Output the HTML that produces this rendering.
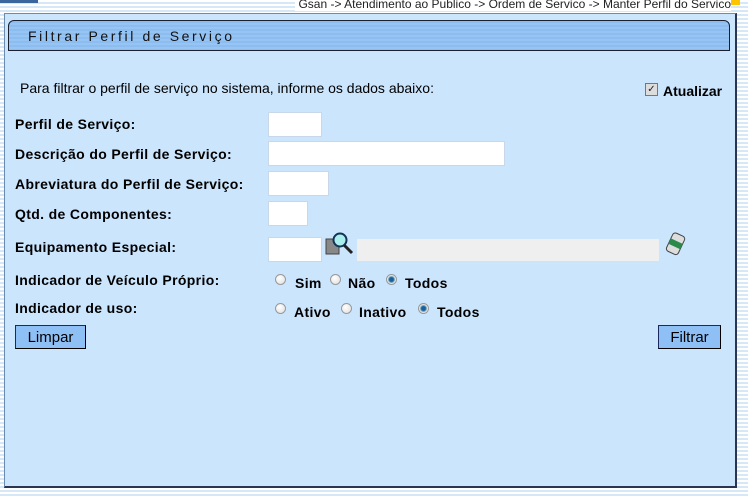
<!DOCTYPE html>
<html><head><meta charset="utf-8"><style>
body{margin:0;width:748px;height:498px;overflow:hidden;position:relative;font-family:"Liberation Sans",Arial,sans-serif;
background:repeating-linear-gradient(180deg,#ffffff 0 2px,#d6e8f7 2px 4px);}
.a{position:absolute}
.panel{left:4px;top:13px;width:733px;height:475px;background:#cbe5fd;border:1px solid #223;border-left-color:#6a8cb0;border-top-color:#6a8cb0;box-sizing:border-box;border-right:2px solid #2a3550;border-bottom:2px solid #2a3550}
.title{left:8px;top:20px;width:722px;height:31px;box-sizing:border-box;border:1px solid #1a2030;border-radius:6px 6px 0 0;
background:repeating-linear-gradient(180deg,#8dbdf0 0 2px,#97c5f3 2px 4px);font-size:14px;letter-spacing:2.6px;color:#111;padding:7px 0 0 19px}
.l{font-size:14px;font-weight:bold;color:#000;left:15px;letter-spacing:0.35px}
.in{background:#fff;border:1px solid #c8d8e8;box-sizing:border-box}
.r{width:11px;height:11px;border-radius:50%;border:1px solid #999;background:radial-gradient(circle at 40% 35%,#fff,#ddd);box-sizing:border-box}
.r.on{background:radial-gradient(circle,#1a5fa0 0 2px,#7ab 3px,#eee 4px)}
.btn{background:#8fc0f5;border:1px solid #1a2a60;border-right-color:#000;border-bottom-color:#000;font-size:15px;text-align:center;box-sizing:border-box;padding-top:3px;height:24px}
</style></head><body>
<div class="a" style="left:0;top:0;width:38px;height:3px;background:#3a66a0"></div>
<div class="a" style="left:550px;top:0;width:190px;height:5px;background:#ffc400"></div>
<div class="a" style="right:17px;top:-3px;font-size:12px;color:#222;background:#fff;padding-left:3px">Gsan -&gt; Atendimento ao Publico -&gt; Ordem de Servico -&gt; Manter Perfil do Servico</div>
<div class="a panel"></div>
<div class="a title">Filtrar Perfil de Serviço</div>
<div class="a" style="left:20px;top:80px;font-size:14px">Para filtrar o perfil de serviço no sistema, informe os dados abaixo:</div>
<div class="a" style="left:645px;top:83px;width:11px;height:11px;border:1px solid #777;background:#ddd;font-size:10px;line-height:11px;text-align:center;color:#222">✓</div>
<div class="a l" style="left:663px;top:83px;letter-spacing:0">Atualizar</div>
<div class="a l" style="top:116px">Perfil de Serviço:</div>
<div class="a in" style="left:268px;top:112px;width:54px;height:25px"></div>
<div class="a l" style="top:146px">Descrição do Perfil de Serviço:</div>
<div class="a in" style="left:268px;top:141px;width:237px;height:25px"></div>
<div class="a l" style="top:176px">Abreviatura do Perfil de Serviço:</div>
<div class="a in" style="left:268px;top:171px;width:61px;height:25px"></div>
<div class="a l" style="top:206px">Qtd. de Componentes:</div>
<div class="a in" style="left:268px;top:201px;width:40px;height:25px"></div>
<div class="a l" style="top:239px">Equipamento Especial:</div>
<div class="a in" style="left:268px;top:237px;width:54px;height:25px"></div>
<svg class="a" style="left:325px;top:231px" width="30" height="28"><rect x="1" y="8" width="13" height="15" fill="#888" stroke="#444"/><circle cx="15" cy="9" r="6.5" fill="#aee" stroke="#135" stroke-width="2"/><line x1="19" y1="14" x2="27" y2="22" stroke="#222" stroke-width="3"/></svg>
<div class="a" style="left:357px;top:239px;width:302px;height:22px;background:#efefef"></div>
<svg class="a" style="left:664px;top:230px" width="24" height="28"><g transform="rotate(25 12 14)"><rect x="5" y="4" width="13" height="20" rx="3" fill="#ddd" stroke="#444"/><rect x="5" y="11" width="13" height="6" fill="#2a8a4a"/></g></svg>
<div class="a l" style="top:272px">Indicador de Veículo Próprio:</div>
<div class="a r" style="left:275px;top:274px"></div><div class="a l" style="left:295px;top:275px">Sim</div>
<div class="a r" style="left:330px;top:274px"></div><div class="a l" style="left:348px;top:275px">Não</div>
<div class="a r on" style="left:386px;top:274px"></div><div class="a l" style="left:405px;top:275px">Todos</div>
<div class="a l" style="top:300px">Indicador de uso:</div>
<div class="a r" style="left:275px;top:303px"></div><div class="a l" style="left:294px;top:304px">Ativo</div>
<div class="a r" style="left:341px;top:303px"></div><div class="a l" style="left:359px;top:304px">Inativo</div>
<div class="a r on" style="left:418px;top:303px"></div><div class="a l" style="left:437px;top:304px">Todos</div>
<div class="a btn" style="left:15px;top:325px;width:71px">Limpar</div>
<div class="a btn" style="left:658px;top:325px;width:63px">Filtrar</div>
</body></html>
